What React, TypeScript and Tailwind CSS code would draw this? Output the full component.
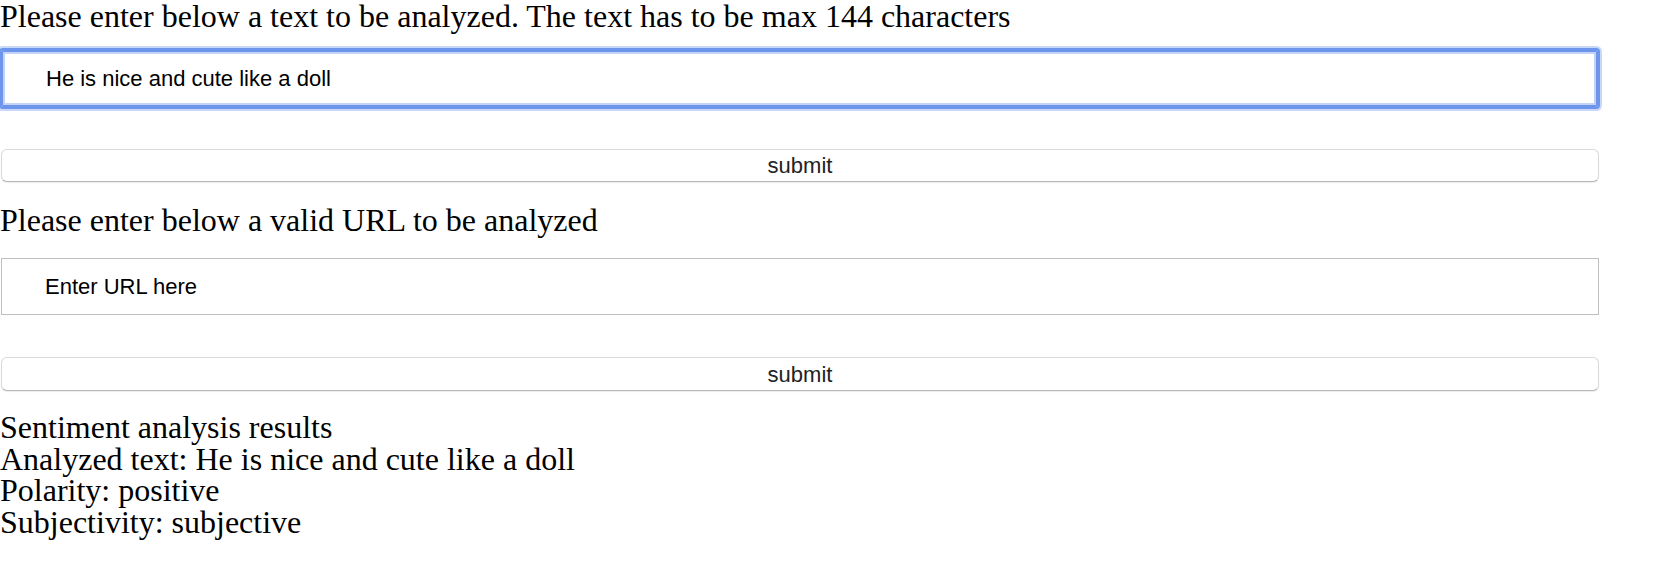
import { useState } from "react";

export default function App() {
  const [text, setText] = useState("He is nice and cute like a doll");
  const [url, setUrl] = useState("");

  return (
    <div className="bg-white text-black w-[1657px] h-[580px] overflow-hidden font-['Liberation_Serif','Times_New_Roman',serif] text-[32px] leading-[32px]">
      <form onSubmit={(e) => e.preventDefault()}>
        <div>Please enter below a text to be analyzed. The text has to be max 144 characters</div>
        <input
          value={text}
          onChange={(e) => setText(e.target.value)}
          maxLength={144}
          className="block mt-[18px] ml-[1px] w-[1597px] h-[57px] pl-[43px] border-2 border-[#6d95ec] rounded-[2px] shadow-[inset_0_0_0_2px_#c3d3f6,0_0_0_2px_#6d95ec,0_0_0_4px_#c8d8f8] outline-none font-['Liberation_Sans',Arial,sans-serif] text-[22px] text-black"
        />
        <button className="block mt-[42px] ml-[1px] w-[1598px] h-[33px] bg-white border border-[#d9d9d9] border-b-[#b8b8b8] rounded-[6px] shadow-[0_1px_1px_rgba(0,0,0,0.08)] font-['Liberation_Sans',Arial,sans-serif] text-[22px] leading-[31px] text-[#222]">
          submit
        </button>
      </form>

      <form onSubmit={(e) => e.preventDefault()} className="mt-[22px]">
        <div>Please enter below a valid URL to be analyzed</div>
        <input
          value={url}
          onChange={(e) => setUrl(e.target.value)}
          placeholder="Enter URL here"
          className="block mt-[22px] ml-[1px] w-[1598px] h-[57px] pl-[43px] border border-[#bfbfbf] outline-none font-['Liberation_Sans',Arial,sans-serif] text-[22px] text-black placeholder:text-black"
        />
        <button className="block mt-[42px] ml-[1px] w-[1598px] h-[34px] bg-white border border-[#d9d9d9] border-b-[#b8b8b8] rounded-[6px] shadow-[0_1px_1px_rgba(0,0,0,0.08)] font-['Liberation_Sans',Arial,sans-serif] text-[22px] leading-[31px] text-[#222]">
          submit
        </button>
      </form>

      <div className="mt-[21px] leading-[31.7px]">
        <div>Sentiment analysis results</div>
        <div>Analyzed text: He is nice and cute like a doll</div>
        <div>Polarity: positive</div>
        <div>Subjectivity: subjective</div>
      </div>
    </div>
  );
}
